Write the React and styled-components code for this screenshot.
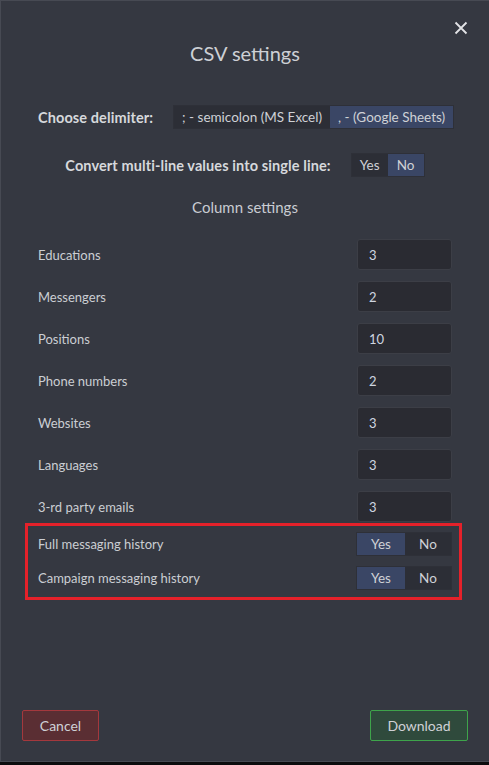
import styled, { createGlobalStyle } from 'styled-components'

const Global = createGlobalStyle`
    html, body {
        margin: 0;
        padding: 0;
        background: #0c0c0e;
        font-family: Lato, "Open Sans", sans-serif;
        overflow: hidden;
    }
`

const Modal = styled.div`
    box-sizing: border-box;
    width: 490px;
    height: 762px;
    background: #353841;
    border: 1px solid #474a53;
    position: relative;
    display: flex;
    flex-direction: column;
    padding: 38px 37px 20px 37px;
    color: #cfd1d6;
`
const Close = styled.button`
    position: absolute;
    top: 20px;
    right: 20px;
    width: 16px;
    height: 16px;
    padding: 0;
    border: none;
    background: none;
    cursor: pointer;
`
const Title = styled.h2`
    margin: 0;
    text-align: center;
    font-size: 20px;
    font-weight: 400;
    color: #cdd0d5;
    line-height: 28px;
`
const OptionRow = styled.div`
    display: flex;
    align-items: center;
    justify-content: ${p => p.$center ? 'center' : 'flex-start'};
    gap: ${p => p.$gap}px;
    margin-top: ${p => p.$top}px;
    white-space: nowrap;
`
const BoldLabel = styled.span`
    flex-shrink: 0;
    font-weight: 700;
    font-size: 14.5px;
    letter-spacing: 0.1px;
    color: #d6d8dc;
`
const Segments = styled.div`
    display: flex;
    flex-shrink: 0;
    border: 1px solid #2e3038;
`
const Segment = styled.button`
    height: ${p => p.$h || 22}px;
    min-width: ${p => p.$w ? p.$w + 'px' : 'auto'};
    padding: 0 ${p => p.$pad ?? 8}px;
    border: none;
    white-space: nowrap;
    font-family: inherit;
    font-size: 13.5px;
    color: #cfd1d6;
    background: ${p => p.$active ? '#3a4665' : '#2c2e36'};
    cursor: pointer;
`
const Subtitle = styled.h3`
    margin: 21px 0 0;
    text-align: center;
    font-size: 15px;
    font-weight: 400;
    color: #c9ccd2;
`
const Rows = styled.div`
    display: flex;
    flex-direction: column;
    gap: 11px;
    margin-top: 23px;
`
const Row = styled.div`
    display: flex;
    align-items: center;
    justify-content: space-between;
    height: 31px;
`
const Label = styled.span`
    font-size: 13px;
    color: #cbced3;
`
const NumberInput = styled.input`
    box-sizing: border-box;
    width: 95px;
    height: 31px;
    background: #2a2b32;
    border: 1px solid #3c3e46;
    border-radius: 3px;
    padding: 0 11px;
    font-family: inherit;
    font-size: 13px;
    color: #cfd6e0;
    outline: none;
`
const Highlight = styled.div`
    display: flex;
    flex-direction: column;
    gap: 10px;
    margin: 1px 0 0 -13px;
    width: 437px;
    box-sizing: border-box;
    border: 3px solid #e5212a;
    padding: 6px 7px 7px 10px;
`
const ToggleRow = styled.div`
    display: flex;
    align-items: center;
    justify-content: space-between;
    height: 24px;
`
const Spacer = styled.div`
    flex: 1;
`
const Footer = styled.div`
    display: flex;
    justify-content: space-between;
    margin-left: -16px;
    margin-right: -16px;
`
const ActionButton = styled.button`
    height: 31px;
    width: ${p => p.$w}px;
    border-radius: 2px;
    border: 1px solid ${p => p.$border};
    background: ${p => p.$bg};
    color: #cfd1d6;
    font-family: inherit;
    font-size: 14px;
    cursor: pointer;
`

const columns = [
    ['Educations', 3],
    ['Messengers', 2],
    ['Positions', 10],
    ['Phone numbers', 2],
    ['Websites', 3],
    ['Languages', 3],
    ['3-rd party emails', 3],
]

const YesNo = ({ yes }) => (
    <Segments>
        <Segment $w={48} $h={22} $active={yes}>Yes</Segment>
        <Segment $w={46} $h={22} $active={!yes}>No</Segment>
    </Segments>
)

const App = () => {
    return (
        <>
            <Global />
            <Modal>
                <Close aria-label="close">
                    <svg width="14" height="14" viewBox="0 0 14 14">
                        <path d="M1.5 1.5 L12.5 12.5 M12.5 1.5 L1.5 12.5" stroke="#e2e3e6" strokeWidth="1.8" />
                    </svg>
                </Close>
                <Title>CSV settings</Title>

                <OptionRow $top={38} $gap={20}>
                    <BoldLabel>Choose delimiter:</BoldLabel>
                    <Segments>
                        <Segment>; - semicolon (MS Excel)</Segment>
                        <Segment $active>, - (Google Sheets)</Segment>
                    </Segments>
                </OptionRow>

                <OptionRow $top={24} $gap={20} $center>
                    <BoldLabel>Convert multi-line values into single line:</BoldLabel>
                    <Segments>
                        <Segment $w={36} $pad={0}>Yes</Segment>
                        <Segment $w={36} $pad={0} $active>No</Segment>
                    </Segments>
                </OptionRow>

                <Subtitle>Column settings</Subtitle>

                <Rows>
                    {columns.map(([name, value]) => (
                        <Row key={name}>
                            <Label>{name}</Label>
                            <NumberInput defaultValue={value} />
                        </Row>
                    ))}
                </Rows>

                <Highlight>
                    <ToggleRow>
                        <Label>Full messaging history</Label>
                        <YesNo yes />
                    </ToggleRow>
                    <ToggleRow>
                        <Label>Campaign messaging history</Label>
                        <YesNo yes />
                    </ToggleRow>
                </Highlight>

                <Spacer />

                <Footer>
                    <ActionButton $w={77} $bg="#5a2e33" $border="#a4383d">Cancel</ActionButton>
                    <ActionButton $w={98} $bg="#2f4a3c" $border="#3ea44b">Download</ActionButton>
                </Footer>
            </Modal>
        </>
    )
}

export default App
